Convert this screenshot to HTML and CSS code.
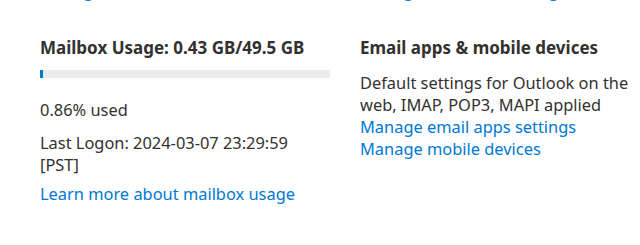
FILE: index.html
```html
<!DOCTYPE html>
<html>
<head>
<meta charset="utf-8">
<link rel="stylesheet" href="styles.css">
</head>
<body>
<div class="page">
  <div class="grid prev">
    <a class="link" href="#">Manage mailbox</a>
    <a class="link" href="#">Manage email forwarding</a>
  </div>
  <div class="grid">
    <section class="col">
      <h2 class="title">Mailbox Usage: 0.43 GB/49.5 GB</h2>
      <div class="bar"><div class="fill" style="width:1%"></div></div>
      <p class="text used">0.86% used</p>
      <p class="text logon">Last Logon: 2024-03-07 23:29:59 [PST]</p>
      <a class="link learn" href="#">Learn more about mailbox usage</a>
    </section>
    <section class="col">
      <h2 class="title">Email apps &amp; mobile devices</h2>
      <p class="text desc">Default settings for Outlook on the web, IMAP, POP3, MAPI applied</p>
      <a class="link" href="#">Manage email apps settings</a>
      <a class="link" href="#">Manage mobile devices</a>
    </section>
  </div>
</div>
</body>
</html>
```

FILE: styles.css
```css
html, body {
  margin: 0;
  padding: 0;
  background: #ffffff;
}
body {
  font-family: "Noto Sans", "Open Sans", sans-serif;
  font-size: 16.4px;
  color: #323130;
  overflow: hidden;
}
.page {
  padding: 0 40px;
  margin-top: -20px;
}
.grid {
  display: grid;
  grid-template-columns: 290px 290px;
  column-gap: 30px;
}
.prev {
  line-height: 22px;
  height: 22px;
  margin-bottom: 35px;
}
.col {
  display: flex;
  flex-direction: column;
  align-items: flex-start;
}
.title {
  margin: 0;
  font-size: 17px;
  font-weight: 700;
  line-height: 22px;
  color: #323130;
}
.bar {
  width: 290px;
  height: 8px;
  background: #edebe9;
  margin-top: 11px;
}
.fill {
  height: 100%;
  background: #0078d4;
}
.text {
  margin: 0;
  line-height: 22px;
}
.used {
  margin-top: 21px;
}
.logon {
  margin-top: 11px;
}
.learn {
  margin-top: 7px;
}
.desc {
  margin-top: 13px;
}
.link {
  color: #0078d4;
  text-decoration: none;
  line-height: 22px;
}
```
